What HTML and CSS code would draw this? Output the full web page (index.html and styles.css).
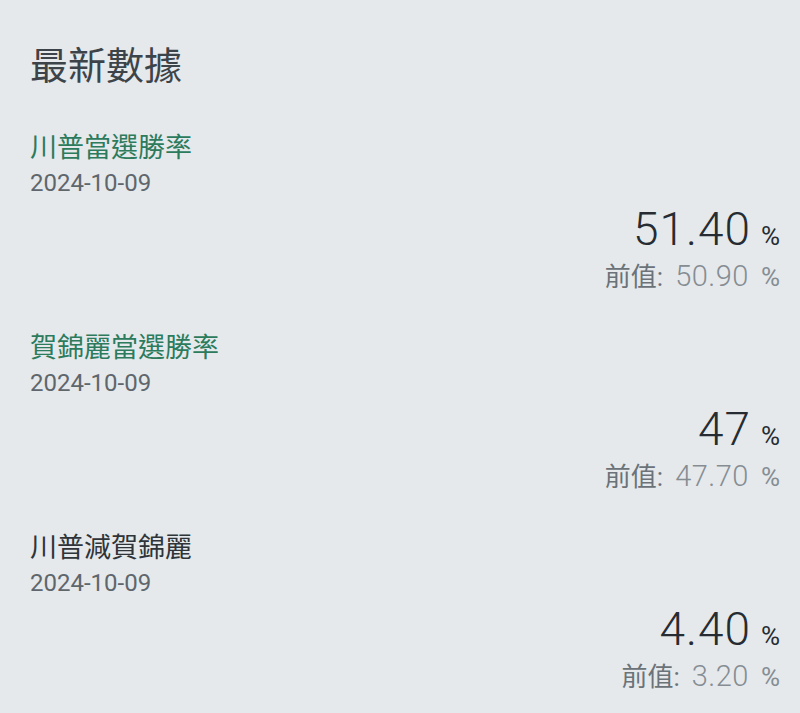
FILE: index.html
```html
<!DOCTYPE html>
<html>
<head>
    <meta charset="UTF-8">
    <title>最新數據</title>
    <link rel="stylesheet" href="styles.css">
</head>
<body>
<div class="page">
    <h1 class="title">最新數據</h1>
    <ul class="list">
        <li class="item">
            <p class="name green">川普當選勝率</p>
            <p class="date">2024-10-09</p>
            <p class="value"><span class="num">51.40</span><span class="unit">%</span></p>
            <p class="prev"><span class="label">前值:</span><span class="num">50.90</span><span class="unit">%</span></p>
        </li>
        <li class="item">
            <p class="name green">賀錦麗當選勝率</p>
            <p class="date">2024-10-09</p>
            <p class="value"><span class="num">47</span><span class="unit">%</span></p>
            <p class="prev"><span class="label">前值:</span><span class="num">47.70</span><span class="unit">%</span></p>
        </li>
        <li class="item">
            <p class="name">川普減賀錦麗</p>
            <p class="date">2024-10-09</p>
            <p class="value"><span class="num">4.40</span><span class="unit">%</span></p>
            <p class="prev"><span class="label">前值:</span><span class="num">3.20</span><span class="unit">%</span></p>
        </li>
    </ul>
</div>
</body>
</html>
```

FILE: styles.css
```css
body, div, h1, ul, li, p {
    margin: 0;
    padding: 0;
}

ul, li {
    list-style: none;
}

body {
    background: #e5e9ec;
    font-family: Roboto, "Noto Sans CJK TC", sans-serif;
    color: #3b4248;
}

.page {
    padding: 42px 20px 0 30px;
}

/*标题*/
.title {
    font-size: 38px;
    line-height: 48px;
    font-weight: 400;
    color: #3d4449;
    margin-bottom: 40px;
}

/*数据列表*/
.list {
    display: flex;
    flex-direction: column;
    gap: 29px;
}

.item .name {
    font-size: 27px;
    line-height: 36px;
    color: #2f3439;
}

.item .name.green {
    color: #2c7b5c;
}

.item .date {
    font-size: 24px;
    line-height: 34px;
    color: #5f666c;
}

/*当前值*/
.item .value {
    text-align: right;
    height: 48px;
    line-height: 48px;
    margin-top: 6px;
    color: #262c31;
}

.item .value .num {
    font-family: "Roboto Light", Roboto, sans-serif;
    font-size: 46px;
    font-weight: 300;
    letter-spacing: 1px;
    line-height: 1;
}

.item .value .unit {
    font-size: 26px;
    line-height: 1;
    margin-left: 10px;
}

/*前值*/
.item .prev {
    text-align: right;
    height: 40px;
    line-height: 40px;
    margin-top: 7px;
    color: #858d93;
}

.item .prev .label {
    font-size: 26px;
    line-height: 1;
    color: #6b7278;
}

.item .prev .num {
    font-family: "Roboto Light", Roboto, sans-serif;
    font-size: 29px;
    font-weight: 300;
    letter-spacing: 0.5px;
    line-height: 1;
    margin-left: 12px;
}

.item .prev .unit {
    font-size: 26px;
    line-height: 1;
    margin-left: 12px;
}
```
